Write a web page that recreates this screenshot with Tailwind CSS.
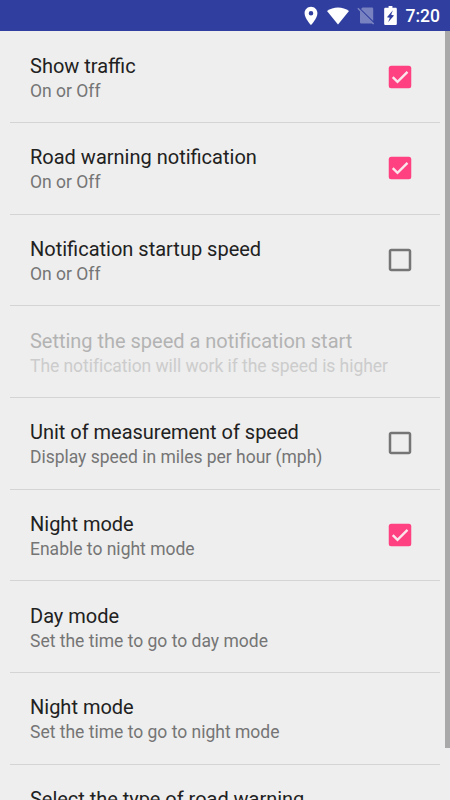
<!DOCTYPE html>
<html lang="en">
<head>
<meta charset="utf-8">
<title>Settings</title>
<script src="https://cdn.jsdelivr.net/npm/@tailwindcss/browser@4"></script>
</head>
<body class="bg-[#eeeeee]">
<svg class="hidden">
  <symbol id="on" viewBox="0 0 24 24"><rect x="3" y="3" width="18" height="18" rx="2" fill="#ff4081"/><path d="M6.200 12.100l3.800 3.800 8-8" fill="none" stroke="#fbe6ec" stroke-width="1.900"/></symbol>
  <symbol id="off" viewBox="0 0 24 24"><path fill="#757575" d="M19 5v14H5V5h14m0-2H5c-1.100 0-2 .9-2 2v14c0 1.100.9 2 2 2h14c1.100 0 2-.9 2-2V5c0-1.100-.9-2-2-2z"/></symbol>
</svg>
<div class="relative flex h-[800px] w-[450px] flex-col overflow-hidden font-[Roboto,sans-serif]">
  <header class="flex h-[31px] shrink-0 items-center justify-end bg-[#303f9f] pr-[10px] text-white">
    <svg class="mr-[5px] size-[22px]" viewBox="0 0 24 24" fill="currentColor"><path d="M12 2C8.130 2 5 5.130 5 9c0 5.250 7 13 7 13s7-7.750 7-13c0-3.870-3.130-7-7-7zm0 9.500a2.500 2.500 0 010-5 2.500 2.500 0 010 5z"/></svg>
    <svg class="mr-[6.500px] h-[18px] w-[22px]" viewBox="0 0 22 18" fill="currentColor"><path d="M11 17.500L0 4C3 1.700 7 .5 11 .5S19 1.700 22 4z"/></svg>
    <svg class="mr-[4px] size-[19px] opacity-35" viewBox="0 0 19 19" fill="currentColor"><path d="M6.500 1.500H16a1.200 1.200 0 011.200 1.200V15L5 3zM1.300 2.800L2.400 1.700 18.200 17.500 17.100 18.600 15.900 17.400H5.200A1.200 1.200 0 014 16.200V5.500z"/></svg>
    <svg class="mr-[4px] size-[23px]" viewBox="0 0 24 24" fill="currentColor"><path fill-rule="evenodd" d="M15.670 4H14V2h-4v2H7C6 4 5.400 4.500 5.400 5.330v15.330C5.400 21.400 6 22 6.700 22h10.600c.74 0 1.300-.6 1.300-1.330V5.330C18.600 4.600 18 4 17.300 4zM14.500 6.500L8.300 13.700L11.300 14.300L9.500 19L15.700 12L12.700 11.300z"/></svg>
    <span class="pt-[1px] text-[17.500px] leading-[30px] font-medium">7:20</span>
  </header>
  <main class="flex flex-col px-[10px] pt-[0.3px]">
    <section class="flex h-[91.67px] shrink-0 items-center justify-between border-b border-[#d4d4d4] pl-[20px] pr-[25px]">
      <div class="pt-[2.8px]"><h2 class="text-[20px] leading-[27px] text-[#212121]">Show traffic</h2><p class="text-[17.500px] leading-[23.5px] text-[#757575]">On or Off</p></div>
      <svg class="size-[30px]"><use href="#on"/></svg>
    </section>
    <section class="flex h-[91.67px] shrink-0 items-center justify-between border-b border-[#d4d4d4] pl-[20px] pr-[25px]">
      <div class="pt-[2.8px]"><h2 class="text-[20px] leading-[27px] text-[#212121]">Road warning notification</h2><p class="text-[17.500px] leading-[23.5px] text-[#757575]">On or Off</p></div>
      <svg class="size-[30px]"><use href="#on"/></svg>
    </section>
    <section class="flex h-[91.67px] shrink-0 items-center justify-between border-b border-[#d4d4d4] pl-[20px] pr-[25px]">
      <div class="pt-[2.8px]"><h2 class="text-[20px] leading-[27px] text-[#212121]">Notification startup speed</h2><p class="text-[17.500px] leading-[23.5px] text-[#757575]">On or Off</p></div>
      <svg class="size-[30px]"><use href="#off"/></svg>
    </section>
    <section class="flex h-[91.67px] shrink-0 items-center border-b border-[#d4d4d4] pl-[20px]">
      <div class="pt-[2.8px]"><h2 class="text-[20px] leading-[27px] tracking-[-0.02px] text-[#b3b3b3]">Setting the speed a notification start</h2><p class="text-[17.500px] leading-[23.5px] tracking-[-0.05px] text-[#cccccc]">The notification will work if the speed is higher</p></div>
    </section>
    <section class="flex h-[91.67px] shrink-0 items-center justify-between border-b border-[#d4d4d4] pl-[20px] pr-[25px]">
      <div class="pt-[2.8px]"><h2 class="text-[20px] leading-[27px] tracking-[-0.02px] text-[#212121]">Unit of measurement of speed</h2><p class="text-[17.500px] leading-[23.5px] tracking-[-0.02px] text-[#757575]">Display speed in miles per hour (mph)</p></div>
      <svg class="size-[30px]"><use href="#off"/></svg>
    </section>
    <section class="flex h-[91.67px] shrink-0 items-center justify-between border-b border-[#d4d4d4] pl-[20px] pr-[25px]">
      <div class="pt-[2.8px]"><h2 class="text-[20px] leading-[27px] text-[#212121]">Night mode</h2><p class="text-[17.500px] leading-[23.5px] text-[#757575]">Enable to night mode</p></div>
      <svg class="size-[30px]"><use href="#on"/></svg>
    </section>
    <section class="flex h-[91.67px] shrink-0 items-center border-b border-[#d4d4d4] pl-[20px]">
      <div class="pt-[2.8px]"><h2 class="text-[20px] leading-[27px] text-[#212121]">Day mode</h2><p class="text-[17.500px] leading-[23.5px] text-[#757575]">Set the time to go to day mode</p></div>
    </section>
    <section class="flex h-[91.67px] shrink-0 items-center border-b border-[#d4d4d4] pl-[20px]">
      <div class="pt-[2.8px]"><h2 class="text-[20px] leading-[27px] text-[#212121]">Night mode</h2><p class="text-[17.500px] leading-[23.5px] text-[#757575]">Set the time to go to night mode</p></div>
    </section>
    <section class="shrink-0 pl-[20px] pt-[21.500px]">
      <h2 class="text-[20px] leading-[27px] tracking-[-0.03px] text-[#212121]">Select the type of road warning</h2>
    </section>
  </main>
  <div class="absolute right-0 top-[31px] h-[717px] w-[5px] bg-[#a9a9a9]"></div>
</div>
</body>
</html>
